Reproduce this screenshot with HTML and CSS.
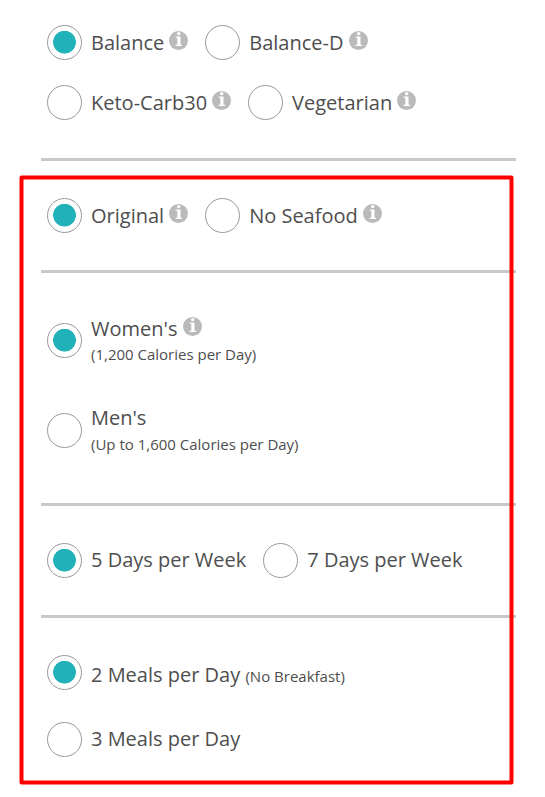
FILE: index.html
```
<!DOCTYPE html>
<html lang="en">
<head>
    <meta charset="UTF-8">
    <meta name="viewport" content="width=device-width, initial-scale=1.0">
    <title>Meal Plan Options</title>
    <link rel="stylesheet" href="styles.css">
</head>
<body>
    <svg class="symbols" width="0" height="0">
        <symbol id="info" viewBox="0 0 19 19">
            <circle cx="9.5" cy="9.5" r="9.5" fill="#bababa"/>
            <circle cx="9.7" cy="2.6" r="1.7" fill="#fff"/>
            <path d="M6.6 5.6h4.9v8.2h1.6V15H6.6v-1.2h1.7V6.8H6.6z" fill="#fff"/>
        </symbol>
    </svg>

    <form class="plan-form">
        <div class="group plan-type">
            <div class="row">
                <label class="option"><input type="radio" name="plan" class="radio" checked><span class="label">Balance</span><svg class="info"><use href="#info"/></svg></label>
                <label class="option"><input type="radio" name="plan" class="radio"><span class="label">Balance-D</span><svg class="info"><use href="#info"/></svg></label>
            </div>
            <div class="row">
                <label class="option"><input type="radio" name="plan" class="radio"><span class="label">Keto-Carb30</span><svg class="info"><use href="#info"/></svg></label>
                <label class="option"><input type="radio" name="plan" class="radio"><span class="label">Vegetarian</span><svg class="info"><use href="#info"/></svg></label>
            </div>
        </div>

        <div class="group seafood">
            <div class="row">
                <label class="option"><input type="radio" name="seafood" class="radio" checked><span class="label">Original</span><svg class="info"><use href="#info"/></svg></label>
                <label class="option"><input type="radio" name="seafood" class="radio"><span class="label">No Seafood</span><svg class="info"><use href="#info"/></svg></label>
            </div>
        </div>

        <div class="group calories">
            <label class="option">
                <input type="radio" name="calories" class="radio" checked>
                <span class="label stacked">
                    <span class="title">Women's<svg class="info"><use href="#info"/></svg></span>
                    <small>(1,200 Calories per Day)</small>
                </span>
            </label>
            <label class="option">
                <input type="radio" name="calories" class="radio">
                <span class="label stacked">
                    <span class="title plain">Men's</span>
                    <small>(Up to 1,600 Calories per Day)</small>
                </span>
            </label>
        </div>

        <div class="group days">
            <div class="row">
                <label class="option"><input type="radio" name="days" class="radio" checked><span class="label">5 Days per Week</span></label>
                <label class="option"><input type="radio" name="days" class="radio"><span class="label">7 Days per Week</span></label>
            </div>
        </div>

        <div class="group meals">
            <label class="option with-note"><input type="radio" name="meals" class="radio" checked><span class="label">2 Meals per Day <small>(No Breakfast)</small></span></label>
            <label class="option"><input type="radio" name="meals" class="radio"><span class="label">3 Meals per Day</span></label>
        </div>
    </form>

    <!-- highlight around the plan details -->
    <svg class="highlight" width="545" height="797">
        <rect x="21.5" y="177.5" width="490" height="605"/>
    </svg>
</body>
</html>
```
FILE: styles.css
```
* {
    margin: 0;
    padding: 0;
    box-sizing: border-box;
}

body {
    background: #fff;
    color: #4e4e4e;
    font-family: 'Open Sans', sans-serif;
    font-size: 20px;
    line-height: 27px;
    overflow: hidden;
}

.symbols {
    position: absolute;
}

.plan-form {
    width: 475px;
    margin-left: 41px;
    padding-top: 25px;
}

/* Groups */
.group {
    display: flex;
    flex-direction: column;
    padding-left: 6px;
    border-bottom: 3px solid #c8c8c8;
}

.plan-type {
    gap: 25px;
    padding-bottom: 38px;
}

.seafood {
    padding-top: 37px;
    padding-bottom: 37px;
}

.calories {
    gap: 43px;
    padding-top: 42px;
    padding-bottom: 51px;
}

.days {
    padding-top: 37px;
    padding-bottom: 37px;
}

.meals {
    gap: 32px;
    padding-top: 37px;
    border-bottom: none;
}

/* Options */
.row {
    display: flex;
    gap: 17px;
}

.option {
    display: flex;
    align-items: center;
    white-space: nowrap;
}

.radio {
    appearance: none;
    flex: none;
    width: 35px;
    height: 35px;
    margin-right: 9px;
    border: 1px solid #999;
    border-radius: 50%;
}

.radio:checked {
    background: radial-gradient(circle at 50% 49%, #20b2b8 11px, transparent 11.7px);
}

.calories .radio {
    margin-top: 4px;
}

.info {
    width: 19px;
    height: 19px;
    margin-left: 5px;
    margin-bottom: 4px;
}

.days .label,
.meals .label {
    padding-bottom: 2px;
}

.meals .with-note .label {
    padding-top: 5px;
    padding-bottom: 0;
}

small {
    font-size: 15px;
}

.stacked {
    display: flex;
    flex-direction: column;
    height: 47px;
}

.stacked .title {
    display: flex;
    align-items: center;
}

.stacked .plain {
    margin-top: -1px;
    margin-bottom: 1px;
}

.stacked .info {
    margin-left: 6px;
}

.stacked small {
    line-height: 24px;
}

/* Highlight */
.highlight {
    position: absolute;
    top: 0;
    left: 0;
    pointer-events: none;
}

.highlight rect {
    fill: none;
    stroke: #f00;
    stroke-width: 4;
    stroke-linejoin: round;
}
```
